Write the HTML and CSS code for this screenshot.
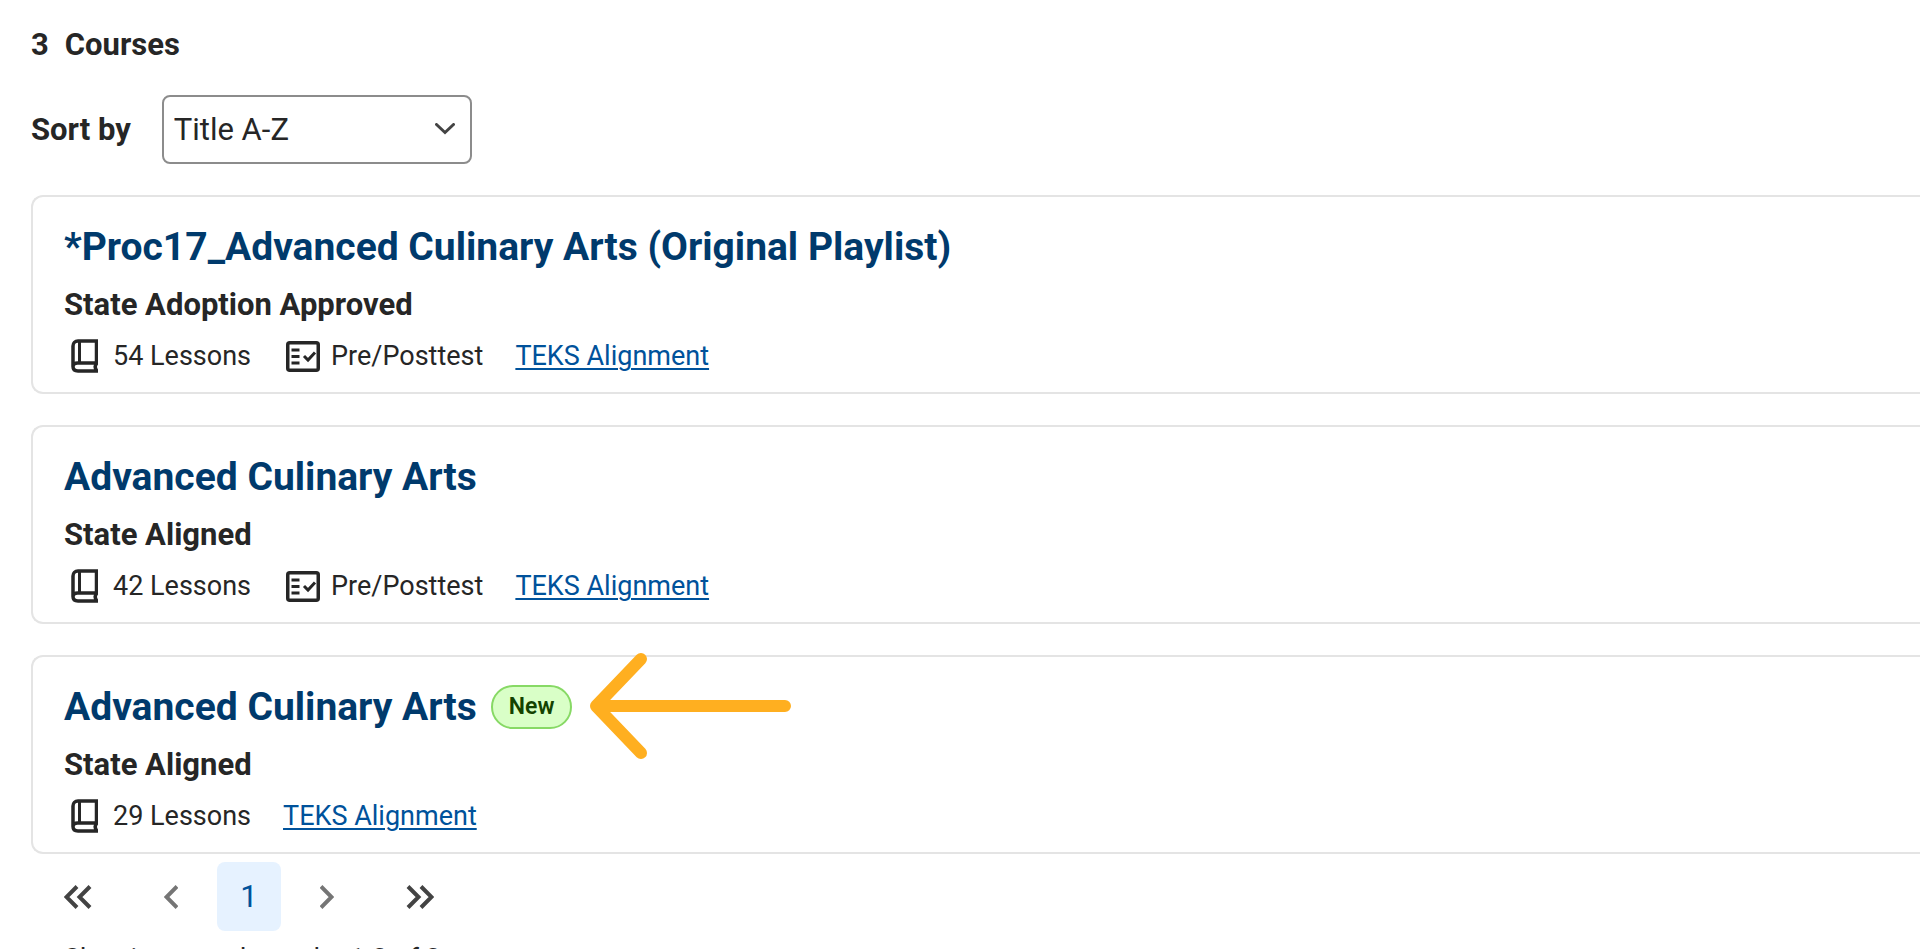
FILE: index.html
```html
<!DOCTYPE html>
<html lang="en">
  <head>
    <meta charset="UTF-8" />
    <meta name="viewport" content="width=device-width, initial-scale=1.0" />
    <title>Courses</title>
    <link rel="stylesheet" href="styles.css">
  </head>
  <body>
    <!-- shared icons -->
    <svg class="icon-defs" aria-hidden="true">
      <symbol id="icon-book" viewBox="0 0 27 34">
        <path d="M28 2H7C4 2 2 4 2 7V27.500C2 30.500 4 32 7 32H28M2 28C2 25.500 4 24 6.500 24H28M25.500 2V24M26 24C23.500 26.500 23.500 29 26 32" fill="none" stroke="currentColor" stroke-width="3.500" />
        <path d="M8.500 2V24" fill="none" stroke="currentColor" stroke-width="3" />
      </symbol>
      <symbol id="icon-test" viewBox="0 0 34 31">
        <rect x="1.750" y="1.750" width="30.500" height="27.500" rx="2" fill="none" stroke="currentColor" stroke-width="3.500" />
        <path d="M5.500 9H13.500M5.500 15.500H13.500M5.500 22H13.500M18 15L22 19L29 11.500" fill="none" stroke="currentColor" stroke-width="3" />
      </symbol>
    </svg>

    <main class="courses">
      <h1 class="course-count"><span>3</span> <span>Courses</span></h1>

      <div class="sort">
        <label for="sortBy">Sort by</label>
        <div class="select-wrap">
          <select id="sortBy" name="sortBy">
            <option value="az">Title A-Z</option>
            <option value="za">Title Z-A</option>
          </select>
          <svg class="chevron" viewBox="0 0 20 12" aria-hidden="true">
            <path d="M1.500 1.500L10 9.500L18.500 1.500" />
          </svg>
        </div>
      </div>

      <div class="course-list">
        <article class="card">
          <h2>*Proc17_Advanced Culinary Arts (Original Playlist)</h2>
          <p class="status">State Adoption Approved</p>
          <div class="meta">
            <span class="lessons"><svg class="icon-book" aria-hidden="true"><use href="#icon-book" /></svg>54 Lessons</span>
            <span class="test"><svg class="icon-test" aria-hidden="true"><use href="#icon-test" /></svg>Pre/Posttest</span>
            <a href="#">TEKS Alignment</a>
          </div>
        </article>

        <article class="card">
          <h2>Advanced Culinary Arts</h2>
          <p class="status">State Aligned</p>
          <div class="meta">
            <span class="lessons"><svg class="icon-book" aria-hidden="true"><use href="#icon-book" /></svg>42 Lessons</span>
            <span class="test"><svg class="icon-test" aria-hidden="true"><use href="#icon-test" /></svg>Pre/Posttest</span>
            <a href="#">TEKS Alignment</a>
          </div>
        </article>

        <article class="card">
          <div class="title-row">
            <h2>Advanced Culinary Arts</h2>
            <span class="badge">New</span>
            <svg class="arrow" viewBox="0 0 204 106" aria-hidden="true">
              <path d="M197 53H8M53 6L8 53L53 100" />
            </svg>
          </div>
          <p class="status">State Aligned</p>
          <div class="meta">
            <span class="lessons"><svg class="icon-book" aria-hidden="true"><use href="#icon-book" /></svg>29 Lessons</span>
            <a href="#">TEKS Alignment</a>
          </div>
        </article>
      </div>

      <nav class="pagination" aria-label="Pagination">
        <button type="button" aria-label="First page">
          <svg width="28" viewBox="0 0 28 24"><path d="M13 1.500L2.500 12L13 22.500M26 1.500L15.500 12L26 22.500" /></svg>
        </button>
        <div class="pages">
          <button type="button" class="step" aria-label="Previous page">
            <svg width="14" viewBox="0 0 14 24"><path d="M13 1.500L2.500 12L13 22.500" /></svg>
          </button>
          <button type="button" class="active" aria-current="page">1</button>
          <button type="button" class="step" aria-label="Next page">
            <svg width="14" viewBox="0 0 14 24"><path d="M1 1.500L11.500 12L1 22.500" /></svg>
          </button>
        </div>
        <button type="button" aria-label="Last page">
          <svg width="28" viewBox="0 0 28 24"><path d="M2 1.500L12.500 12L2 22.500M15 1.500L25.500 12L15 22.500" /></svg>
        </button>
      </nav>
      <p class="showing">Showing search results 1-3 of 3</p>
    </main>
  </body>
</html>
```
FILE: styles.css
```css
* {
  box-sizing: border-box;
}

html {
  height: 100%;
  overflow: hidden;
}

body {
  margin: 0;
  font-family: Roboto, Arial, sans-serif;
  font-size: 31px;
  line-height: 40px;
  color: #262626;
  background-color: #fff;
}

h1,
h2,
p {
  margin: 0;
}

.icon-defs {
  position: absolute;
  width: 0;
  height: 0;
}

.courses {
  padding: 25px 0 0 31px;
}

.course-count {
  display: flex;
  gap: 16px;
  font-size: 31px;
  font-weight: 700;
}

/* Sort bar */
.sort {
  display: flex;
  align-items: center;
  gap: 31px;
  margin: 30px 0 31px;
}

.sort label {
  font-weight: 700;
}

.select-wrap {
  position: relative;
}

.sort select {
  display: block;
  appearance: none;
  width: 310px;
  height: 69px;
  padding: 0 48px 0 10px;
  border: 2px solid #8c8c8c;
  border-radius: 8px;
  background-color: #fff;
  color: #262626;
  font-family: inherit;
  font-size: 31px;
}

.chevron {
  position: absolute;
  top: 28px;
  right: 17px;
  width: 20px;
  height: 12px;
  pointer-events: none;
}

.chevron path {
  fill: none;
  stroke: #434343;
  stroke-width: 3;
  stroke-linecap: round;
}

/* Course cards */
.course-list {
  display: flex;
  flex-direction: column;
  gap: 31px;
}

.card {
  padding: 25px 0 16px 31px;
  border: 2px solid #e4e4e4;
  border-right: 0;
  border-radius: 12px 0 0 12px;
}

.card h2 {
  font-size: 39px;
  line-height: 50px;
  font-weight: 700;
  color: #003a6c;
}

.status {
  margin-top: 13px;
  font-weight: 700;
}

.meta {
  display: flex;
  align-items: center;
  gap: 32px;
  margin-top: 11px;
  font-size: 27px;
}

.meta span {
  display: flex;
  align-items: center;
}

.lessons {
  padding-left: 7px;
}

.test {
  padding-left: 3px;
}

.icon-book {
  width: 27px;
  height: 34px;
  margin-right: 15px;
}

.icon-test {
  width: 34px;
  height: 31px;
  margin-right: 11px;
}

.meta a {
  color: #00529b;
  text-underline-offset: 3px;
  text-decoration-thickness: 2px;
}

.title-row {
  position: relative;
  display: flex;
  align-items: center;
  gap: 14px;
}

.badge {
  padding: 0 16px;
  border: 2px solid #87d965;
  border-radius: 22px;
  background-color: #d9ffc7;
  color: #134200;
  font-size: 23px;
  font-weight: 600;
}

/* callout lying over the card's border */
.arrow {
  position: absolute;
  top: -29px;
  left: 524px;
  width: 204px;
  height: 106px;
}

.arrow path {
  fill: none;
  stroke: #ffaf20;
  stroke-width: 12;
  stroke-linecap: round;
  stroke-linejoin: round;
}

/* Pagination */
.pagination {
  display: flex;
  align-items: center;
  gap: 29px;
  padding: 8px 0 0 15px;
}

.pages {
  display: flex;
  gap: 14px;
}

.pagination button {
  display: flex;
  align-items: center;
  justify-content: center;
  width: 64px;
  height: 69px;
  padding: 0;
  border: 0;
  border-radius: 8px;
  background: none;
  font-family: inherit;
  font-size: 31px;
}

.pagination .active {
  background-color: #e6f2ff;
  color: #00529b;
}

.pagination svg {
  height: 24px;
}

.pagination path {
  fill: none;
  stroke: #434343;
  stroke-width: 4;
}

.pagination .step path {
  stroke: #757575;
}

.showing {
  padding: 8px 0 0 33px;
  font-size: 27px;
}
```
